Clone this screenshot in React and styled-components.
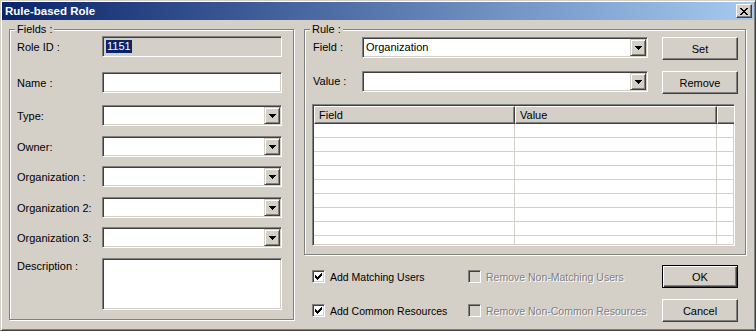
import React from 'react';
import styled, { createGlobalStyle, css } from 'styled-components';

const face = '#d4d0c8';

const GlobalStyle = createGlobalStyle`
  html, body { margin: 0; padding: 0; background: ${face}; }
  body { font-family: "Liberation Sans", Arial, sans-serif; font-size: 11px; color: #000; }
  * { box-sizing: border-box; }
`;

const raised = css`
  border: 1px solid;
  border-color: #fff #404040 #404040 #fff;
  box-shadow: inset -1px -1px #808080;
  background: ${face};
`;

const sunken = css`
  border: 1px solid;
  border-color: #808080 #fff #fff #808080;
  box-shadow: inset 1px 1px #404040, inset -1px -1px ${face};
  padding: 1px;
`;

const Window = styled.div`
  width: 756px;
  height: 331px;
  background: ${face};
  border: 1px solid;
  border-color: ${face} #404040 #404040 ${face};
  box-shadow: inset 1px 1px #fff, inset -1px -1px #808080;
  padding: 1px;
  display: flex;
  flex-direction: column;
  overflow: hidden;
`;

const TitleBar = styled.div`
  height: 18px;
  flex: none;
  background: linear-gradient(to right, #0a246a, #a6caf0);
  display: flex;
  align-items: center;
  justify-content: space-between;
  padding: 0 2px 0 3px;
`;

const Title = styled.span`
  color: #fff;
  font-weight: bold;
  font-size: 11.5px;
  line-height: 18px;
`;

const CloseButton = styled.div`
  ${raised};
  width: 16px;
  height: 14px;
  display: flex;
  align-items: center;
  justify-content: center;
`;

const Body = styled.div`
  display: flex;
  gap: 10px;
  padding: 9px 0 0 7px;
`;

const GroupBox = styled.div`
  position: relative;
  width: ${p => p.$w}px;
  height: ${p => p.$h}px;
  flex: none;
  border: 1px solid #808080;
  box-shadow: inset 1px 1px #fff, 1px 1px #fff;
`;

const Legend = styled.span`
  position: absolute;
  top: -7px;
  left: 5px;
  padding: 0 2px;
  line-height: 13px;
  background: ${face};
  white-space: nowrap;
`;

const FieldsInner = styled.div`
  display: flex;
  flex-direction: column;
  padding: 6px 0 0 7px;
`;

const FormRow = styled.div`
  display: flex;
  align-items: ${p => (p.$top ? 'flex-start' : 'center')};
  margin-top: ${p => p.$mt || 0}px;
`;

const Label = styled.span`
  width: ${p => p.$w}px;
  flex: none;
  white-space: nowrap;
  padding-left: ${p => p.$pl || 0}px;
  padding-top: ${p => p.$pt || 0}px;
  line-height: ${p => (p.$lh ? `${p.$lh}px` : 'normal')};
`;

const TextBox = styled.div`
  ${sunken};
  width: ${p => p.$w}px;
  height: ${p => p.$h || 21}px;
  background: ${p => (p.$readOnly ? face : '#fff')};
  display: flex;
  align-items: center;
  padding-left: 3px;
`;

const Selection = styled.span`
  background: #0a246a;
  color: #fff;
  line-height: 13px;
  padding: 0 1px;
`;

const ComboBox = styled.div`
  ${sunken};
  width: ${p => p.$w}px;
  height: 21px;
  background: #fff;
  display: flex;
  flex: none;
`;

const ComboText = styled.span`
  flex: 1;
  padding-left: 2px;
  line-height: 17px;
  white-space: nowrap;
  overflow: hidden;
`;

const DropButton = styled.div`
  border: 1px solid;
  border-color: ${face} #404040 #404040 ${face};
  box-shadow: inset 1px 1px #fff, inset -1px -1px #808080;
  background: ${face};
  width: 16px;
  height: 17px;
  flex: none;
  display: flex;
  align-items: center;
  justify-content: center;
`;

const RightColumn = styled.div`
  display: flex;
  flex-direction: column;
`;

const RuleInner = styled.div`
  display: flex;
  flex-direction: column;
  padding: 7px 0 0 7px;
`;

const PushButton = styled.div`
  ${raised};
  width: 76px;
  height: 23px;
  flex: none;
  margin-left: ${p => p.$ml || 0}px;
  display: flex;
  align-items: center;
  justify-content: center;
  ${p =>
    p.$default &&
    css`
      border: 1px solid #000;
      box-shadow: inset 1px 1px #fff, inset -1px -1px #404040, inset -2px -2px #808080;
    `}
`;

const ListView = styled.div`
  ${sunken};
  width: 423px;
  height: 142px;
  margin-top: 10px;
  background: #fff;
  overflow: hidden;
`;

const HeaderRow = styled.div`
  display: flex;
  height: 18px;
`;

const HeaderCell = styled.div`
  ${raised};
  width: ${p => p.$w}px;
  flex: none;
  padding-left: 4px;
  line-height: 16px;
`;

const GridRow = styled.div`
  display: flex;
  height: 14px;
  border-bottom: 1px solid ${face};
`;

const GridCell = styled.div`
  width: ${p => p.$w}px;
  flex: none;
  border-right: 1px solid ${face};
`;

const Bottom = styled.div`
  display: grid;
  grid-template-columns: 156px 194px 76px;
  grid-auto-rows: 23px;
  row-gap: 11px;
  align-items: center;
  padding-left: 8px;
  margin-top: 10px;
`;

const CheckItem = styled.div`
  display: flex;
  align-items: center;
  gap: 5px;
  white-space: nowrap;
  font-size: 10.5px;
  color: ${p => (p.$disabled ? '#808080' : '#000')};
  text-shadow: ${p => (p.$disabled ? '1px 1px 0 #fff' : 'none')};
`;

const CheckBox = styled.span`
  ${sunken};
  width: 13px;
  height: 13px;
  flex: none;
  background: ${p => (p.$disabled ? face : '#fff')};
  display: flex;
  align-items: center;
  justify-content: center;
  padding: 0;
`;

const Arrow = () => (
  <svg width="7" height="4" viewBox="0 0 7 4" shapeRendering="crispEdges">
    <path d="M0 0h7v1h-1v1h-1v1h-1v1h-1v-1h-1v-1h-1v-1h-1z" fill="#000" />
  </svg>
);

const CloseGlyph = () => (
  <svg width="8" height="7" viewBox="0 0 8 7" shapeRendering="crispEdges">
    <path
      d="M0 0h2v1h1v1h2v-1h1v-1h2v1h-1v1h-1v1h-1v1h1v1h1v1h1v1h-2v-1h-1v-1h-2v1h-1v1h-2v-1h1v-1h1v-1h1v-1h-1v-1h-1v-1h-1z"
      fill="#000"
    />
  </svg>
);

const CheckGlyph = () => (
  <svg width="7" height="7" viewBox="0 0 7 7" shapeRendering="crispEdges">
    <path
      d="M6 0h1v3h-1v1h-1v1h-1v1h-1v1h-1v-1h-1v-1h-1v-3h1v1h1v1h1v-1h1v-1h1v-1h1z"
      fill="#000"
    />
  </svg>
);

const Combo = ({ w, value }) => (
  <ComboBox $w={w}>
    <ComboText>{value}</ComboText>
    <DropButton>
      <Arrow />
    </DropButton>
  </ComboBox>
);

const Check = ({ label, checked, disabled }) => (
  <CheckItem $disabled={disabled}>
    <CheckBox $disabled={disabled}>{checked && <CheckGlyph />}</CheckBox>
    <span>{label}</span>
  </CheckItem>
);

const fieldRows = [
  { label: 'Type:', mt: 12 },
  { label: 'Owner:', mt: 10 },
  { label: 'Organization :', mt: 9 },
  { label: 'Organization 2:', mt: 10 },
  { label: 'Organization 3:', mt: 9 },
];

export default function App() {
  return (
    <>
      <GlobalStyle />
      <Window>
        <TitleBar>
          <Title>Rule-based Role</Title>
          <CloseButton>
            <CloseGlyph />
          </CloseButton>
        </TitleBar>
        <Body>
          <GroupBox $w={285} $h={291}>
            <Legend>Fields :</Legend>
            <FieldsInner>
              <FormRow>
                <Label $w={85}>Role ID :</Label>
                <TextBox $w={180} $readOnly>
                  <Selection>1151</Selection>
                </TextBox>
              </FormRow>
              <FormRow $mt={15}>
                <Label $w={85}>Name :</Label>
                <TextBox $w={180} />
              </FormRow>
              {fieldRows.map(r => (
                <FormRow key={r.label} $mt={r.mt}>
                  <Label $w={85}>{r.label}</Label>
                  <Combo w={180} />
                </FormRow>
              ))}
              <FormRow $mt={10} $top>
                <Label $w={85} $pt={2}>Description :</Label>
                <TextBox $w={180} $h={52} />
              </FormRow>
            </FieldsInner>
          </GroupBox>
          <RightColumn>
            <GroupBox $w={442} $h={226}>
              <Legend>Rule :</Legend>
              <RuleInner>
                <FormRow $top>
                  <Label $w={50} $pl={1} $lh={21}>Field :</Label>
                  <Combo w={286} value="Organization" />
                  <PushButton $ml={14}>Set</PushButton>
                </FormRow>
                <FormRow $top $mt={11}>
                  <Label $w={50} $pl={1} $lh={21}>Value :</Label>
                  <Combo w={286} />
                  <PushButton $ml={14}>Remove</PushButton>
                </FormRow>
                <ListView>
                  <HeaderRow>
                    <HeaderCell $w={201}>Field</HeaderCell>
                    <HeaderCell $w={202}>Value</HeaderCell>
                    <HeaderCell $w={40} />
                  </HeaderRow>
                  {Array.from({ length: 9 }).map((_, i) => (
                    <GridRow key={i}>
                      <GridCell $w={201} />
                      <GridCell $w={202} />
                    </GridRow>
                  ))}
                </ListView>
              </RuleInner>
            </GroupBox>
            <Bottom>
              <Check label="Add Matching Users" checked />
              <Check label="Remove Non-Matching Users" disabled />
              <PushButton $default>OK</PushButton>
              <Check label="Add Common Resources" checked />
              <Check label="Remove Non-Common Resources" disabled />
              <PushButton>Cancel</PushButton>
            </Bottom>
          </RightColumn>
        </Body>
      </Window>
    </>
  );
}
